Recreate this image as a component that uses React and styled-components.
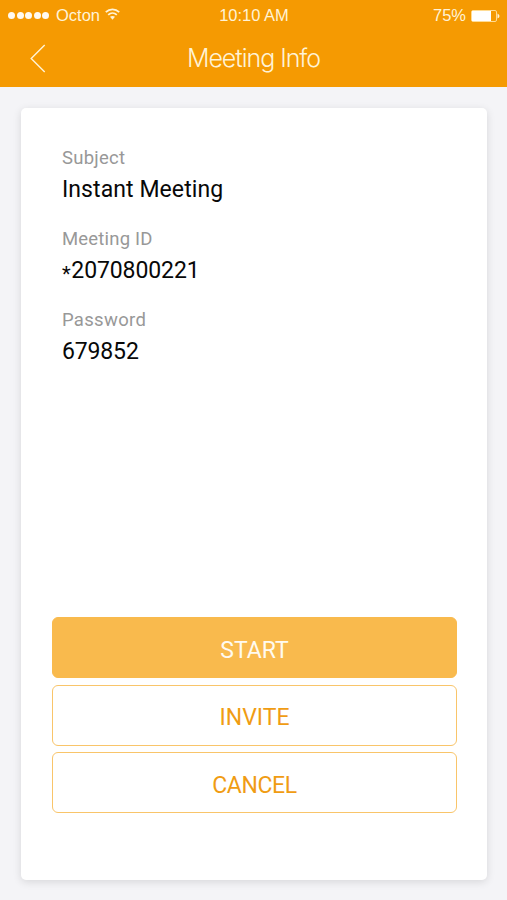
import React from "react";
import styled, { createGlobalStyle } from "styled-components";

const GlobalStyle = createGlobalStyle`
  * {
    box-sizing: border-box;
  }

  body {
    margin: 0;
    background-color: #f4f4f7;
    font-family: Roboto, sans-serif;
  }
`;

const Screen = styled.div`
  width: 100%;
  height: 900px;
  display: flex;
  flex-direction: column;
`;

const Header = styled.header`
  background-color: #f59a02;
  color: #fff3d6;
  height: 87px;
`;

const StatusBar = styled.div`
  display: grid;
  grid-template-columns: 1fr auto 1fr;
  align-items: center;
  height: 30px;
  padding: 0 7px 0 8px;
`;

const StatusGroup = styled.div`
  display: flex;
  align-items: center;
  justify-content: ${(props) => (props.$end ? "flex-end" : "flex-start")};
`;

const StatusText = styled.span`
  padding-bottom: 1px;
  font-family: "Liberation Sans", sans-serif;
  font-size: 16.5px;
  line-height: 28px;
`;

const Dots = styled.div`
  display: flex;
  gap: 1.5px;
  margin-right: 7px;
`;

const Dot = styled.span`
  width: 7px;
  height: 7px;
  border-radius: 50%;
  background-color: #fffaf0;
`;

const Wifi = styled.svg`
  margin: 0 0 2px 5px;
`;

const Battery = styled.svg`
  margin: 1px 0 0 4px;
`;

const NavBar = styled.nav`
  display: grid;
  grid-template-columns: 80px 1fr 80px;
  align-items: center;
  height: 57px;
`;

const BackButton = styled.button`
  display: flex;
  border: none;
  background: none;
  color: inherit;
  padding: 0 0 1px 30px;
`;

const Title = styled.h1`
  margin: 0;
  font-family: Inter, "Liberation Sans", sans-serif;
  font-size: 25px;
  font-weight: 300;
  letter-spacing: -1.05px;
  line-height: 57px;
  text-align: center;
`;

const Card = styled.main`
  display: flex;
  flex-direction: column;
  justify-content: space-between;
  height: 772px;
  margin: 21px 20px 0 21px;
  padding: 37px 30px 67px 31px;
  border-radius: 5px;
  background-color: #fff;
  box-shadow: 0 2px 8px rgba(0, 0, 0, 0.12);
`;

const Details = styled.dl`
  margin: 0;
  padding-left: 10px;
`;

const Field = styled.div`
  height: 81px;
`;

const Label = styled.dt`
  color: #989898;
  font-size: 18.5px;
  line-height: 26px;
  letter-spacing: ${(props) => props.$spacing};
`;

const Value = styled.dd`
  margin: 0;
  color: #080808;
  font-size: 23px;
  line-height: 38px;
  letter-spacing: ${(props) => props.$spacing};
`;

const Star = styled.span`
  margin-right: 0.8px;
  font-size: 20px;
  line-height: 0;
  vertical-align: -3px;
`;

const Actions = styled.div`
  display: flex;
  flex-direction: column;
  gap: 6.5px;
`;

const Button = styled.button`
  height: 61px;
  padding: 5px 0 0;
  border: 1.5px solid ${(props) => (props.$primary ? "#f9ba4d" : "#f9c56a")};
  border-radius: 6px;
  background-color: ${(props) => (props.$primary ? "#f9ba4d" : "#fff")};
  color: ${(props) => (props.$primary ? "#fffaf0" : "#f09c13")};
  font-family: Roboto, sans-serif;
  font-size: 23px;
  letter-spacing: ${(props) => props.$spacing || "0"};
`;

const fields = [
  { label: "Subject", value: "Instant Meeting", labelGap: "0.25px", gap: "0.08px" },
  {
    label: "Meeting ID",
    value: (
      <>
        <Star>*</Star>2070800221
      </>
    ),
    labelGap: "0.2px",
    gap: "-0.1px",
  },
  { label: "Password", value: "679852", labelGap: "0.3px", gap: "-0.15px" },
];

const App = () => {
  return (
    <>
      <GlobalStyle />
      <Screen>
        <Header>
          <StatusBar>
            <StatusGroup>
              <Dots>
                {[1, 2, 3, 4, 5].map((n) => (
                  <Dot key={n} />
                ))}
              </Dots>
              <StatusText>Octon</StatusText>
              <Wifi width="15" height="12" viewBox="0 0 15 12" fill="none">
                <path
                  d="M0.8 4.2C4.6 0.5 10.4 0.5 14.2 4.2M3.2 6.8C5.7 4.5 9.3 4.5 11.8 6.8"
                  stroke="currentColor"
                  strokeWidth="1.8"
                />
                <path
                  d="M5 8.8C6.5 7.6 8.5 7.6 10 8.8L7.5 11.7Z"
                  fill="currentColor"
                />
              </Wifi>
            </StatusGroup>
            <StatusText>10:10 AM</StatusText>
            <StatusGroup $end>
              <StatusText>75%</StatusText>
              <Battery width="30" height="12" viewBox="0 0 30 12">
                <rect
                  x="1.5"
                  y="0.5"
                  width="25"
                  height="11"
                  rx="1.5"
                  fill="none"
                  stroke="#ffdc94"
                />
                <rect x="2" y="1" width="19" height="10" fill="#fff" />
                <path d="M27.5 3.5Q29.5 4.5 29.5 6T27.5 8.5Z" fill="#fff3d6" />
              </Battery>
            </StatusGroup>
          </StatusBar>
          <NavBar>
            <BackButton aria-label="Back">
              <svg width="16" height="29" viewBox="0 0 16 29" fill="none">
                <path
                  d="M14.7 1L1.2 14.5L14.7 28"
                  stroke="currentColor"
                  strokeWidth="1.4"
                />
              </svg>
            </BackButton>
            <Title>Meeting Info</Title>
          </NavBar>
        </Header>
        <Card>
          <Details>
            {fields.map((field) => (
              <Field key={field.label}>
                <Label $spacing={field.labelGap}>{field.label}</Label>
                <Value $spacing={field.gap}>{field.value}</Value>
              </Field>
            ))}
          </Details>
          <Actions>
            <Button $primary>START</Button>
            <Button>INVITE</Button>
            <Button $spacing="-0.4px">CANCEL</Button>
          </Actions>
        </Card>
      </Screen>
    </>
  );
};

export default App;
